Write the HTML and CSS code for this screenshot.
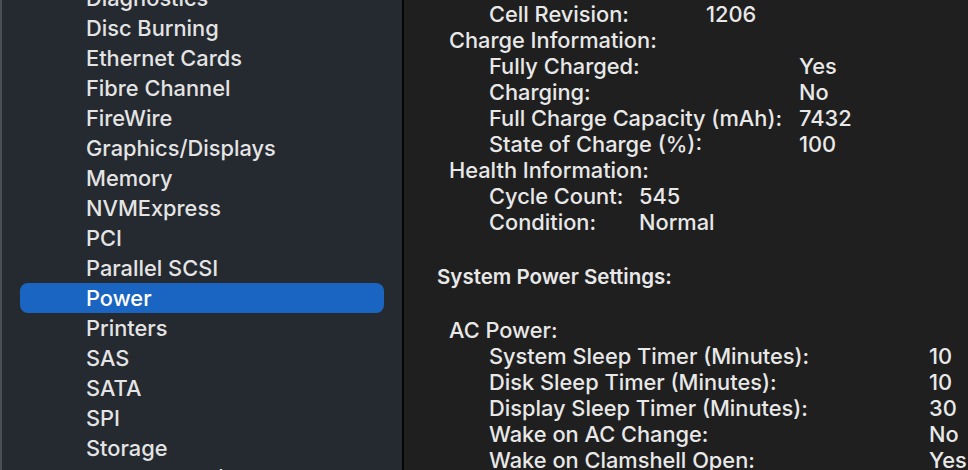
FILE: index.html
```html
<!DOCTYPE html>
<html lang="en">
<head>
    <meta charset="UTF-8">
    <meta name="viewport" content="width=device-width, initial-scale=1.0">
    <title>System Information</title>
    <link rel="stylesheet" href="styles.css">
</head>
<body>
    <div class="window">
        <ul class="sidebar">
            <li>Diagnostics</li>
            <li>Disc Burning</li>
            <li>Ethernet Cards</li>
            <li>Fibre Channel</li>
            <li>FireWire</li>
            <li>Graphics/Displays</li>
            <li>Memory</li>
            <li>NVMExpress</li>
            <li>PCI</li>
            <li>Parallel SCSI</li>
            <li class="selected">Power</li>
            <li>Printers</li>
            <li>SAS</li>
            <li>SATA</li>
            <li>SPI</li>
            <li>Storage</li>
            <li>Thunderbolt/USB4</li>
        </ul>
        <div class="divider"></div>
        <div class="details">
            <div class="group group-cell">
                <span class="label">Cell Revision:</span><span>1206</span>
            </div>
            <div class="heading">Charge Information:</div>
            <div class="group group-charge">
                <span class="label">Fully Charged:</span><span>Yes</span>
                <span class="label">Charging:</span><span>No</span>
                <span class="label">Full Charge Capacity (mAh):</span><span>7432</span>
                <span class="label">State of Charge (%):</span><span>100</span>
            </div>
            <div class="heading">Health Information:</div>
            <div class="group group-health">
                <span class="label">Cycle Count:</span><span>545</span>
                <span class="label">Condition:</span><span>Normal</span>
            </div>
            <div class="section-title">System Power Settings:</div>
            <div class="heading">AC Power:</div>
            <div class="group group-ac">
                <span class="label">System Sleep Timer (Minutes):</span><span>10</span>
                <span class="label">Disk Sleep Timer (Minutes):</span><span>10</span>
                <span class="label">Display Sleep Timer (Minutes):</span><span>30</span>
                <span class="label">Wake on AC Change:</span><span>No</span>
                <span class="label">Wake on Clamshell Open:</span><span>Yes</span>
            </div>
        </div>
    </div>
</body>
</html>
```

FILE: styles.css
```css
body {
    margin: 0;
    padding: 0;
    background-color: #1f1f1f;
    font-family: Inter, "Liberation Sans", sans-serif;
    font-size: 21.8px;
    font-weight: 500;
    color: #e8e8e8;
    overflow: hidden;
}

.window {
    display: flex;
    height: 470px;
    overflow: hidden;
}

/* left source list */
.sidebar {
    width: 402px;
    margin: 0;
    padding: 0 20px 0 20px;
    box-sizing: border-box;
    list-style-type: none;
    background-color: #252930;
    border-left: 2px solid #4b4e54;
    flex-shrink: 0;
}

.sidebar li {
    height: 30px;
    line-height: 30px;
    padding-left: 64px;
    border-radius: 8px;
    color: #e4e4e4;
    white-space: nowrap;
}

.sidebar li:first-child {
    margin-top: -17px;
}

.sidebar .selected {
    background-color: #1a65c1;
    color: #ffffff;
    margin-right: -2px;
    margin-left: -2px;
    padding-left: 66px;
}

.divider {
    width: 2px;
    background-color: #050505;
    flex-shrink: 0;
}

/* right detail pane */
.details {
    flex: 1;
    padding: 1px 0 0 45px;
    white-space: nowrap;
    line-height: 26px;
}

.group {
    display: grid;
    padding-left: 40px;
}

.group-cell {
    grid-template-columns: 217px auto;
}

.group-charge {
    grid-template-columns: 310px auto;
}

.group-health {
    grid-template-columns: 150px auto;
}

.group-ac {
    grid-template-columns: 440px auto;
}

.section-title {
    font-size: 20.5px;
    font-weight: 600;
    margin: 29px 0 27px -12px;
}
```
